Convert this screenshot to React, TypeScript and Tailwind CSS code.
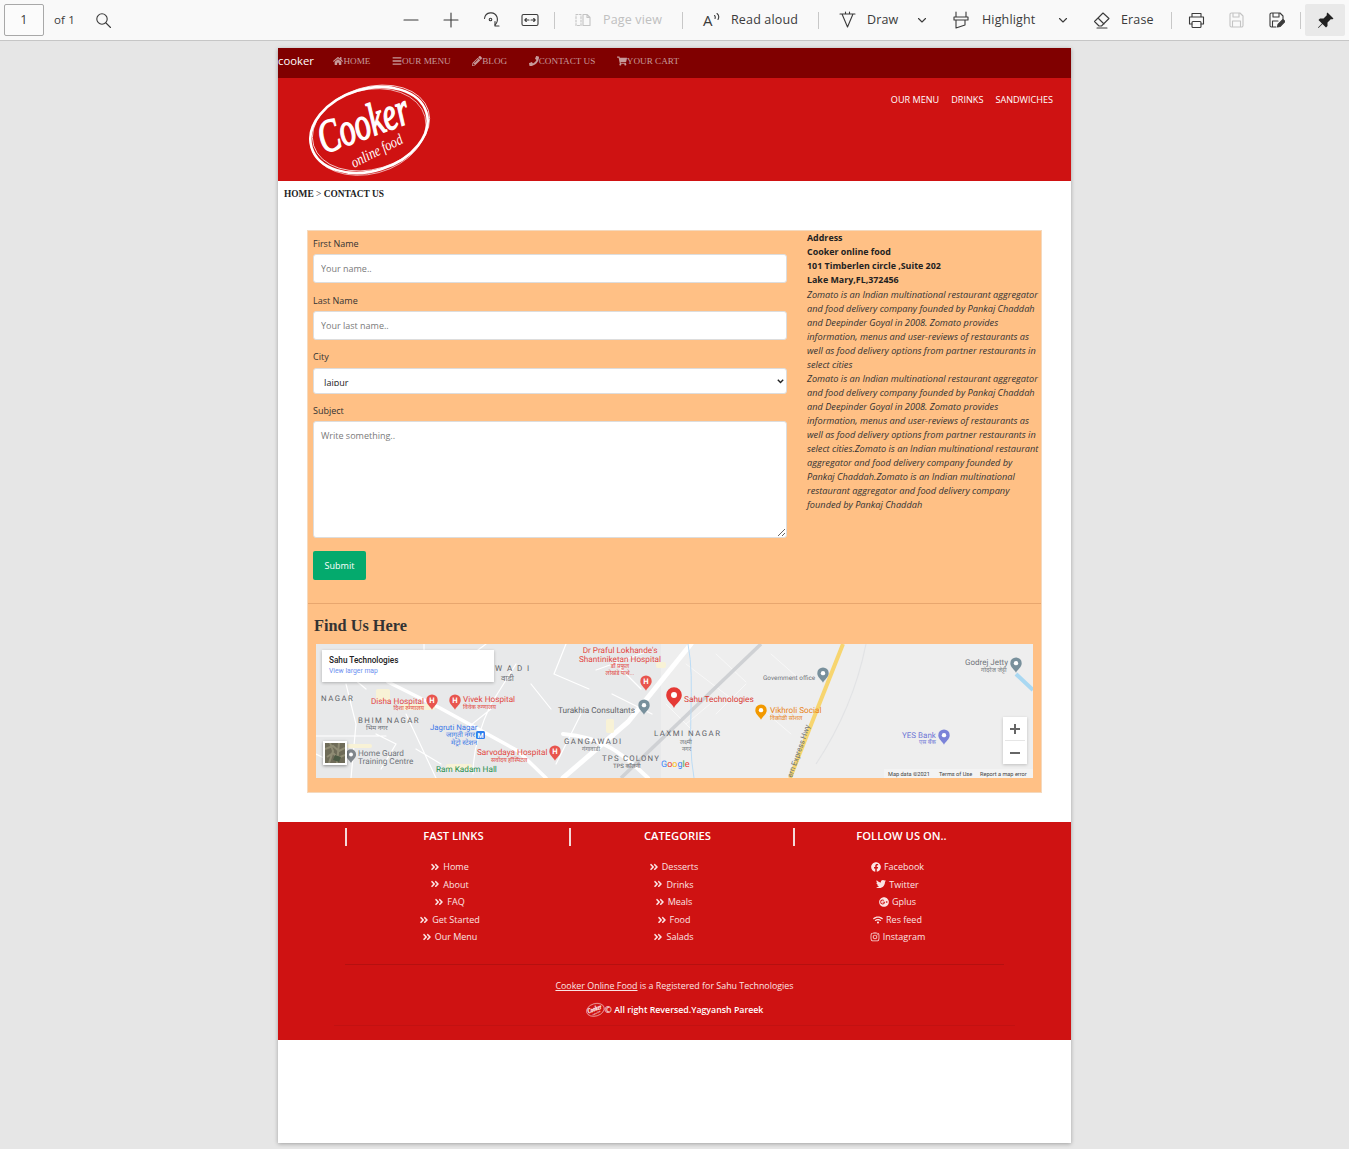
import React from "react";
import { FaHome, FaBars, FaPencilAlt, FaPhone, FaShoppingCart, FaAngleDoubleRight, FaFacebook, FaTwitter, FaGooglePlus, FaWifi, FaInstagram } from "react-icons/fa";

const S = ({ className = "", children, w = 20, h = 20, vb = "0 0 20 20" }: any) => (
  <svg width={w} height={h} viewBox={vb} fill="none" stroke="currentColor" strokeWidth="1.1" strokeLinecap="round" strokeLinejoin="round" className={`shrink-0 ${className}`}>{children}</svg>
);
const Sep = ({ className }: { className: string }) => <div className={`w-px h-[17px] shrink-0 bg-[#c8c8c8] ${className}`} />;
const Chevron = ({ className }: { className: string }) => (
  <S w={10} h={10} vb="0 0 10 10" className={className}><path d="M1.5 3.5 5 7l3.5-3.5" /></S>
);

function Toolbar() {
  return (
    <div className="h-[41px] shrink-0 bg-[#f9f9f9] border-b border-[#c6c6c6] flex items-center whitespace-nowrap text-[12.5px] text-[#3b3b3b] tracking-[0.15px]">
      <div className="ml-[4px] w-[40px] h-[32px] shrink-0 border border-[#a8a8a8] rounded-[2px] bg-[#fbfbfb] flex items-center justify-center text-[12.5px]">1</div>
      <span className="ml-[10px] w-[20px] text-[11.5px]">of 1</span>
      <S className="ml-[21px]" w={17} h={17} vb="0 0 17 17"><circle cx="7" cy="7" r="5.2" /><path d="m11 11 4.5 4.5" /></S>
      <S className="ml-[291px]" w={16} h={16} vb="0 0 16 16"><path d="M1 8h14" /></S>
      <S className="ml-[24px]" w={16} h={16} vb="0 0 16 16"><path d="M1 8h14M8 1v14" /></S>
      <S className="ml-[23px]" w={18} h={20} vb="0 0 18 20"><path d="M2.5 8.5A6.5 6.5 0 0 1 15 7c1 3 0 6-2 8" /><path d="M13 11.5V16h4" /><circle cx="8.5" cy="9.5" r="1.3" /></S>
      <S className="ml-[21px]" w={18} h={14} vb="0 0 18 14"><rect x="1" y="1.5" width="16" height="11" rx="1.5" /><path d="M4 7h4M3.8 7l1.5-1.5M3.8 7l1.5 1.5M14 7h-4M14.2 7l-1.5-1.5M14.2 7l-1.5 1.5" /></S>
      <Sep className="ml-[15px]" />
      <S className="ml-[20px] text-[#c4c4c4]" w={16} h={16} vb="0 0 16 16"><path d="M1 2.500h5v11H1z" strokeDasharray="2 1.500" /><path d="M8 2.500h4l3 3v8H8zM12 2.500v3h3" /></S>
      <span className="ml-[12px] w-[61px] text-[#c0c0c0]">Page view</span>
      <Sep className="ml-[18px]" />
      <span className="ml-[20px] relative w-[18px] h-[20px] shrink-0 text-[15px] flex items-center">A<S className="absolute left-[10px] top-[1px]" w={8} h={9} vb="0 0 8 9"><path d="M1.5 4.5c1 .8 1 1.5.5 3M4 2.5c2 1.500 2 4 1 6" /></S></span>
      <span className="ml-[10px] w-[69px]">Read aloud</span>
      <Sep className="ml-[18px]" />
      <S className="ml-[20px]" w={17} h={18} vb="0 0 17 18"><path d="M1 3h15M3 3l5.500 13L14 3M6.500 3V1M10.500 3V1" /></S>
      <span className="ml-[11px] w-[31px]">Draw</span>
      <Chevron className="ml-[19px]" />
      <S className="ml-[26px]" w={16} h={18} vb="0 0 16 18"><path d="M3 1v5M13 1v5M1 6h14v3H1zM3 9v8l9-3V9" /></S>
      <span className="ml-[13px] w-[57px]">Highlight</span>
      <Chevron className="ml-[19px]" />
      <S className="ml-[25px]" w={18} h={18} vb="0 0 18 18"><path d="M1.500 10.500 10 2l6 5.500-7.500 7.500H6zM5 7l6 6M4 17h10" /></S>
      <span className="ml-[10px] w-[32px]">Erase</span>
      <Sep className="ml-[18px]" />
      <S className="ml-[16px]" w={17} h={17} vb="0 0 17 17"><path d="M4 5V1.500h9V5M4 12H1.500V5h14v7H13" /><rect x="4" y="9.500" width="9" height="6" rx="1" /></S>
      <S className="ml-[24px] text-[#c4c4c4]" w={15} h={16} vb="0 0 15 16"><path d="M1 2.500A1.500 1.500 0 0 1 2.500 1H11l3 3v9.500a1.500 1.500 0 0 1-1.500 1.500h-10A1.500 1.500 0 0 1 1 13.500zM4 1v4h6V1M3.500 15V9h8v6" /></S>
      <S className="ml-[25px]" w={16} h={16} vb="0 0 16 16"><path d="M7 15H2.500A1.500 1.500 0 0 1 1 13.500v-11A1.500 1.500 0 0 1 2.500 1H11l3 3v3M4 1v4h6V1M3.500 15V9H9" /><path d="m8.500 15 .5-2.500 5-5 2 2-5 5z" fill="currentColor" /></S>
      <Sep className="ml-[15px]" />
      <div className="ml-[4px] w-[40px] h-[32px] shrink-0 bg-[#e9e9e9] rounded-[2px] flex items-center justify-center">
        <svg width="17" height="17" viewBox="0 0 17 17" fill="#222"><path d="M10.500 0.500 16.500 6.500 15 7.500 14 7 10.500 10.500 10.500 14 9 15.500 5.500 12 1.500 16 1 15.500 5 11.500 1.500 8 3 6.500 6.500 6.500 10 3 9.500 2z" /></svg>
      </div>
    </div>
  );
}

function Logo({ w = 126, h = 96 }: { w?: number; h?: number }) {
  return (
    <svg width={w} height={h} viewBox="0 0 126 96" className="block">
      <g fill="none" stroke="#fff">
        <ellipse cx="62" cy="47" rx="60" ry="41" transform="rotate(-17 62 47)" strokeWidth="2.600" />
        <ellipse cx="64" cy="45" rx="60" ry="41" transform="rotate(-17 64 45)" strokeWidth="0.7" />
        <ellipse cx="61" cy="49" rx="59" ry="42" transform="rotate(-15 61 49)" strokeWidth="0.6" />
      </g>
      <text transform="translate(17 71) rotate(-20) scale(1 1.55)" fontFamily="'Liberation Serif', serif" fontStyle="italic" fontSize="30" fill="#fff" stroke="#fff" strokeWidth="0.9" textLength="94" lengthAdjust="spacingAndGlyphs">Cooker</text>
      <text transform="translate(47 85) rotate(-27) scale(1 1.4)" fontFamily="'Liberation Serif', serif" fontStyle="italic" fontSize="11" fill="#fff" textLength="56" lengthAdjust="spacingAndGlyphs">online food</text>
    </svg>
  );
}

function TopNav() {
  const items: [any, string][] = [
    [FaHome, "HOME"],
    [FaBars, "OUR MENU"],
    [FaPencilAlt, "BLOG"],
    [FaPhone, "CONTACT US"],
    [FaShoppingCart, "YOUR CART"],
  ];
  return (
    <div className="h-[30px] bg-[#800000] flex items-center pb-[3px] gap-[21.500px]">
      <span className="text-white text-[11.300px] font-['Open_Sans',sans-serif] -mr-[2px]">cooker</span>
      {items.map(([I, t]) => (
        <span key={t} className="flex items-center text-[#c79a9a] text-[9.200px] font-['Liberation_Serif',serif]">
          <I className="w-[10px] h-[10px]" />{t}
        </span>
      ))}
    </div>
  );
}

const Pin = ({ x, y, c, s = 1, g }: { x: number; y: number; c: string; s?: number; g?: string }) => (
  <g transform={`translate(${x} ${y}) scale(${s})`}>
    <path d="M0 7C-1.500 3.500-6 1.500-6-3a6 6 0 0 1 12 0C6 1.500 1.500 3.500 0 7z" fill={c} />
    {g ? <text x="0" y="0" textAnchor="middle" fontSize="8" fontWeight="700" fill="#fff">{g}</text> : <circle cy="-3" r="2.300" fill="#fff" />}
  </g>
);

function MapBlock() {
  const labels: [number, number, string, string, number, string?, number?][] = [
    [304, 9, "Dr Praful Lokhande's", "#e2463e", 8.2, "middle"],
    [304, 18, "Shantiniketan Hospital", "#e2463e", 8.2, "middle"],
    [304, 24, "डॉ प्रफुल", "#e2463e", 6, "middle"],
    [304, 31, "लोखंडे पाथे...", "#e2463e", 6, "middle"],
    [108, 60, "Disha Hospital", "#e2463e", 8.2, "end"],
    [108, 66, "दिशा रुग्णालय", "#e2463e", 6, "end"],
    [147, 58, "Vivek Hospital", "#e2463e", 8.2],
    [147, 65, "विवेक रुग्णालय", "#e2463e", 6],
    [161, 111, "Sarvodaya Hospital", "#e2463e", 8.2],
    [175, 118, "सर्वोदय हॉस्पिटल", "#e2463e", 6],
    [42, 79, "BHIM NAGAR", "#5f6368", 7.8, undefined, 1.5],
    [50, 86, "भिम नगर", "#70757a", 6.5],
    [5, 57, "NAGAR", "#5f6368", 7.8, undefined, 1.5],
    [114, 86, "Jagruti Nagar", "#3b78e7", 7.8],
    [130, 93, "जागृती नगर", "#3b78e7", 7],
    [135, 101, "मेट्रो स्टेशन", "#3b78e7", 7],
    [42, 112, "Home Guard", "#70757a", 8.2],
    [42, 120, "Training Centre", "#70757a", 8.2],
    [120, 128, "Ram Kadam Hall", "#1e8e4e", 8.2],
    [248, 100, "GANGAWADI", "#5f6368", 7.8, undefined, 1.5],
    [266, 107, "गंगावाडी", "#70757a", 6],
    [286, 117, "TPS COLONY", "#5f6368", 7.8, undefined, 1.2],
    [297, 124, "TPS कॉलनी", "#5f6368", 6],
    [242, 69, "Turakhia Consultants", "#5f6368", 8.2],
    [338, 92, "LAXMI NAGAR", "#5f6368", 7.8, undefined, 1.5],
    [364, 100, "लक्ष्मी", "#70757a", 6],
    [366, 107, "नगर", "#70757a", 6],
    [368, 58, "Sahu Technologies", "#d93a34", 8.300],
    [454, 69, "Vikhroli Social", "#e8831a", 8.2],
    [454, 76, "विक्रोळी सोशल", "#e8831a", 6],
    [447, 36, "Government office", "#70757a", 6.4],
    [649, 21, "Godrej Jetty", "#70757a", 8],
    [665, 28, "गोदरेज जेट्टी", "#70757a", 6],
    [586, 94, "YES Bank", "#6f78d6", 8],
    [603, 100, "एस बँक", "#6f78d6", 6],
    [179, 27, "W A D I", "#5f6368", 8, undefined, 1.4],
    [185, 37, "वाडी", "#70757a", 8],
  ];
  return (
    <div className="relative mt-[8px] ml-[8px] w-[717px] h-[134px] overflow-hidden bg-[#ececec]">
      <svg width="717" height="134" viewBox="0 0 717 134" className="block font-['Roboto','Noto_Sans',sans-serif]" textRendering="geometricPrecision">
        <rect width="717" height="134" fill="#eeeeee" />
        <rect width="345" height="134" fill="#e8e9ea" />
        <g fill="none" stroke="#fff" strokeLinecap="round">
          <path d="M375 0 312 78 247 134" strokeWidth="5" />
          <path d="M247 90c40 3 60 20 85 44" strokeWidth="4" />
          <path d="M72 38l52 26 78 43 28 27" strokeWidth="3.500" />
          <path d="M108 0v30M30 40l10 40-5 54M90 70l30 64M175 60c-12 25-18 48-18 70M200 20l-25 40M250 0l-12 30 35 15M280 26l50-18M20 20l30 25M0 92h70M130 30l40-30M296 50l40 20M60 90l20 10-15 25M100 105l25 15M215 40l20 25M150 85l25-20M0 110l20 10M265 70l-25 50M300 20l25 25" strokeWidth="1.200" />
          <path d="M370 20l55 42M400 55l-30 25M440 60l35 30M430 40l-30 30M455 10l25 22M400 10l30 28M350 60l30 30" strokeWidth="1" stroke="#f8f8f8" />
        </g>
        <path d="M445 0 305 134" stroke="#cfd1d4" strokeWidth="3.500" fill="none" />
        <path d="M527 0 474 134" stroke="#f7d56f" strokeWidth="4" fill="none" />
        <path d="M372 0c8 40-2 90 6 134" stroke="#bcdcf5" strokeWidth="1" fill="none" />
        <path d="M700 30l17 16" stroke="#a9d8f2" strokeWidth="4" fill="none" />
        <path d="M550 0c-10 50-30 90-50 120" stroke="#e2e3e5" strokeWidth="1.200" fill="none" />
        {[[85, 60, 34, 6], [30, 100, 26, 4], [130, 120, 26, 6], [290, 75, 8, 14], [340, 18, 10, 6], [60, 45, 14, 12]].map(([x, y, w, h], i) => (
          <rect key={i} x={x} y={y} width={w} height={h} rx="2" fill="#f8f2d6" />
        ))}
        {labels.map(([x, y, t, c, fs, a, ls]) => (
          <text key={t} x={x} y={y} fill={c} fontSize={fs} textAnchor={(a as any) || "start"} letterSpacing={ls || 0}>{t}</text>
        ))}
        <text transform="translate(476 134) rotate(-71)" fontSize="7.500" fill="#70757a">ern Express Hwy</text>
        <Pin x={116} y={59} c="#e8554e" s={0.95} g="H" />
        <Pin x={139} y={59} c="#e8554e" s={0.95} g="H" />
        <Pin x={239} y={110} c="#e8554e" s={0.95} g="H" />
        <Pin x={330} y={40} c="#e8554e" s={0.95} g="H" />
        <Pin x={35} y={113} c="#80868b" s={0.85} />
        <Pin x={328} y={64} c="#78909c" s={0.95} />
        <Pin x={358} y={55} c="#e53935" s={1.300} />
        <Pin x={445} y={69} c="#f29900" s={0.95} />
        <Pin x={507} y={32} c="#78909c" s={0.95} />
        <Pin x={700} y={22} c="#78909c" s={0.95} />
        <Pin x={628} y={94} c="#7b83d8" s={0.95} />
        <rect x="160" y="87" width="9" height="8" rx="1.500" fill="#2f80ed" />
        <text x="164.500" y="93.500" textAnchor="middle" fontSize="7" fontWeight="700" fill="#fff">M</text>
        <text x="345" y="123" fontSize="9">
          <tspan fill="#4285f4">G</tspan><tspan fill="#ea4335">o</tspan><tspan fill="#fbbc05">o</tspan><tspan fill="#4285f4">g</tspan><tspan fill="#34a853">l</tspan><tspan fill="#ea4335">e</tspan>
        </text>
        <rect x="568" y="125" width="149" height="9" fill="#f3f3f3" />
        <text x="572" y="132" fontSize="5.600" fill="#444">Map data ©2021</text>
        <text x="623" y="132" fontSize="5.600" fill="#444">Terms of Use</text>
        <text x="664" y="132" fontSize="5.600" fill="#444">Report a map error</text>
      </svg>
      <div className="absolute left-[6px] top-[6px] w-[172px] h-[32px] bg-white shadow-[0_1px_3px_rgba(0,0,0,0.25)] pl-[7px] pt-[5px] font-['Roboto',sans-serif]">
        <div className="text-[8.200px] font-medium leading-[11px] text-[#222]">Sahu Technologies</div>
        <div className="text-[6.800px] leading-[11px] text-[#6b8ff0]">View larger map</div>
      </div>
      <div className="absolute left-[7px] top-[97px] w-[24px] h-[24px] border-2 border-white shadow-[0_1px_3px_rgba(0,0,0,0.4)] bg-[#6e6b58]">
        <svg width="20" height="20" viewBox="0 0 20 20" className="block"><path d="M0 6 8 3 14 8 20 5M2 14l6-4 5 5 7-3M5 0l3 8-4 12M14 0l-2 20" stroke="#8f8c74" strokeWidth="2" fill="none" /><path d="M10 12l6 2-2 5-6-2z" fill="#4c5a44" /></svg>
      </div>
      <div className="absolute left-[687px] top-[73px] w-[24px] h-[47px] bg-white shadow-[0_1px_3px_rgba(0,0,0,0.2)] flex flex-col items-center text-[#666]">
        <svg width="12" height="12" viewBox="0 0 12 12" className="mt-[6px]"><path d="M1 6h10M6 1v10" stroke="currentColor" strokeWidth="2" /></svg>
        <div className="w-[20px] h-px bg-[#e6e6e6] mt-[5px]" />
        <svg width="12" height="12" viewBox="0 0 12 12" className="mt-[6px]"><path d="M1 6h10" stroke="currentColor" strokeWidth="2" /></svg>
      </div>
    </div>
  );
}

const para1 = ["Zomato is an Indian multinational restaurant aggregator", "and food delivery company founded by Pankaj Chaddah", "and Deepinder Goyal in 2008. Zomato provides", "information, menus and user-reviews of restaurants as", "well as food delivery options from partner restaurants in", "select cities"];
const para2 = ["Zomato is an Indian multinational restaurant aggregator", "and food delivery company founded by Pankaj Chaddah", "and Deepinder Goyal in 2008. Zomato provides", "information, menus and user-reviews of restaurants as", "well as food delivery options from partner restaurants in", "select cities.Zomato is an Indian multinational restaurant", "aggregator and food delivery company founded by", "Pankaj Chaddah.Zomato is an Indian multinational", "restaurant aggregator and food delivery company", "founded by Pankaj Chaddah"];

function FormCard() {
  const inputC = "block w-full h-[29px] bg-white border border-[#ddd] rounded-[3px] px-[7px] text-[9px] placeholder:text-[#7a7a7a] outline-none";
  return (
    <div className="mx-[29px] mt-[30px] h-[563px] bg-[#ffc085] border border-[#f5d9bd] font-['Open_Sans',sans-serif] text-[#333]">
      <div className="flex h-[372px]">
        <div className="w-[479px] pl-[5px] pt-[7px] shrink-0">
          <label className="block text-[9px] leading-[12px]">First Name</label>
          <input className={`${inputC} mt-[4px]`} placeholder="Your name.." />
          <label className="block text-[9px] leading-[12px] mt-[12px]">Last Name</label>
          <input className={`${inputC} mt-[4px]`} placeholder="Your last name.." />
          <label className="block text-[9px] leading-[12px] mt-[11px]">City</label>
          <div className="relative mt-[5px]">
            <select className="block w-full h-[26px] appearance-none bg-white border border-[#ddd] rounded-[3px] px-[10px] py-[7px] text-[9px] text-[#222] outline-none" defaultValue="Jaipur">
              <option>Jaipur</option>
            </select>
            <svg width="7" height="5" viewBox="0 0 7 5" className="absolute right-[3px] top-[11px]"><path d="M.8.800 3.500 3.500 6.200.800" fill="none" stroke="#222" strokeWidth="1.400" /></svg>
          </div>
          <label className="block text-[9px] leading-[12px] mt-[11px]">Subject</label>
          <textarea className="block w-full h-[117px] bg-white border border-[#ddd] rounded-[3px] px-[7px] py-[7px] mt-[4px] text-[9px] placeholder:text-[#7a7a7a] outline-none" placeholder="Write something.." />
          <button className="block mt-[13px] w-[53px] h-[29px] bg-[#04aa6d] rounded-[2px] text-white text-[9px]">Submit</button>
        </div>
        <div className="ml-[20px] text-[9.200px] leading-[14px] text-[#333] whitespace-nowrap">
          <div className="font-bold text-[#222] text-[8.900px]">Address</div>
          <div className="font-bold text-[#222] text-[8.900px]">Cooker online food</div>
          <div className="font-bold text-[#222] text-[8.900px]">101 Timberlen circle ,Suite 202</div>
          <div className="font-bold text-[#222] text-[8.900px]">Lake Mary,FL,372456</div>
          <div className="italic mt-[1px]">{para1.map((l) => <div key={l}>{l}</div>)}</div>
          <div className="italic">{para2.map((l) => <div key={l}>{l}</div>)}</div>
        </div>
      </div>
      <div className="h-px bg-[#e8a66e]" />
      <h2 className="mt-[12px] ml-[6px] font-['Liberation_Serif',serif] font-bold text-[16.300px] leading-[20px] text-[#333]">Find Us Here</h2>
      <MapBlock />
    </div>
  );
}

function Footer() {
  const A = FaAngleDoubleRight;
  const cols: { h: string; items: [any, string][] }[] = [
    { h: "FAST LINKS", items: [[A, "Home"], [A, "About"], [A, "FAQ"], [A, "Get Started"], [A, "Our Menu"]] },
    { h: "CATEGORIES", items: [[A, "Desserts"], [A, "Drinks"], [A, "Meals"], [A, "Food"], [A, "Salads"]] },
    { h: "FOLLOW US ON..", items: [[FaFacebook, "Facebook"], [FaTwitter, "Twitter"], [FaGooglePlus, "Gplus"], [FaWifi, "Res feed"], [FaInstagram, "Instagram"]] },
  ];
  return (
    <div className="mt-[29px] h-[218px] bg-[#cf1212] text-white font-['Open_Sans',sans-serif] pt-[6px]">
      <div className="flex pl-[67px]">
        {cols.map((c) => (
          <div key={c.h} className="relative w-[224px] pr-[7px] text-center">
            <div className="absolute left-0 top-0 w-[2px] h-[18px] bg-[#f4d9d9]" />
            <div className="text-[11.200px] font-semibold leading-[14px] pt-[1px]">{c.h}</div>
            <ul className="mt-[15px] text-[9px] leading-[17.600px] text-[#fbe4e4]">
              {c.items.map(([I, t]) => (
                <li key={t} className="flex items-center justify-center gap-[3px] h-[17.600px] -ml-[8px]"><I className="w-[10px] h-[10px]" />{t}</li>
              ))}
            </ul>
          </div>
        ))}
      </div>
      <div className="mx-[67px] mt-[18px] h-px bg-[#b51010]" />
      <div className="text-center text-[8.900px] leading-[12px] mt-[15px] text-[#fbe4e4]"><span className="underline">Cooker Online Food</span> is a Registered for Sahu Technologies</div>
      <div className="flex items-center justify-center mt-[9px] text-[8.800px] font-semibold leading-[16px]">
        <Logo w={19} h={18} />
        <span>© All right Reversed.Yagyansh Pareek</span>
      </div>
      <div className="mx-[56px] mt-[6px] h-px bg-[#c21111]" />
    </div>
  );
}

export default function App() {
  return (
    <div className="w-[1349px] h-[1149px] bg-[#e6e6e6] flex flex-col overflow-hidden font-['Open_Sans',sans-serif]">
      <Toolbar />
      <div className="mt-[7px] ml-[278px] w-[793px] h-[1095px] bg-white shadow-[0_1px_4px_rgba(0,0,0,0.3)]">
        <TopNav />
        <div className="h-[103px] bg-[#cf1212] flex justify-between">
          <div className="ml-[29px] mt-[5px]"><Logo /></div>
          <div className="mt-[16px] mr-[18px] flex gap-[12px] text-white text-[9.100px] leading-[12px] h-[12px]">
            <span>OUR MENU</span><span>DRINKS</span><span>SANDWICHES</span>
          </div>
        </div>
        <div className="pl-[6px] pt-[7px] h-[19px] text-[9.400px] leading-[13px] font-['Liberation_Serif',serif] font-bold text-[#222]">HOME <span className="font-normal">&gt;</span> CONTACT US</div>
        <FormCard />
        <Footer />
      </div>
    </div>
  );
}
